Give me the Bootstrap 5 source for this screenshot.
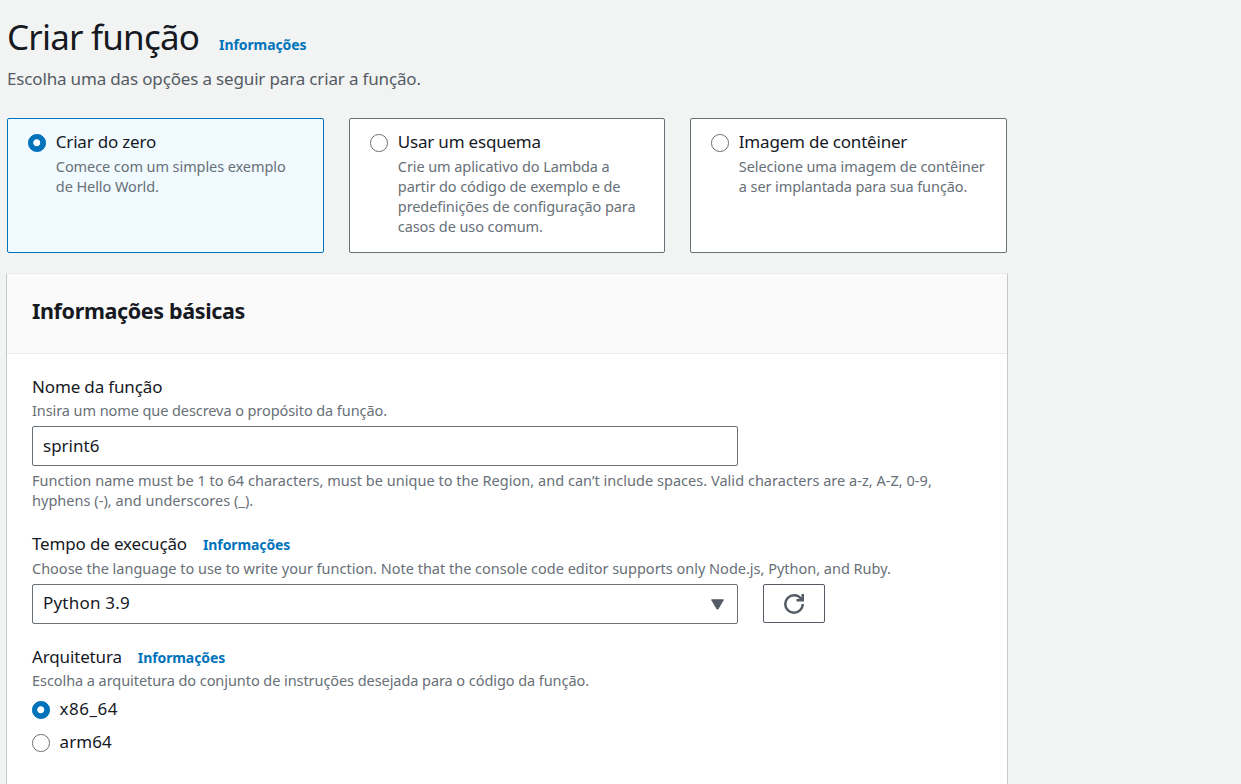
<!DOCTYPE html>
<html lang="pt-BR">
<head>
<meta charset="utf-8">
<meta name="viewport" content="width=device-width, initial-scale=1">
<title>Criar função</title>
<link href="https://cdn.jsdelivr.net/npm/bootstrap@5.3.0/dist/css/bootstrap.min.css" rel="stylesheet">
<style>
  body { background: #f2f3f3; color: #16191f; font-family: "Noto Sans", sans-serif; font-size: 17px; letter-spacing: -.15px; line-height: 27px; height: 784px; overflow: hidden; }
  .page-col { width: 1000px; margin-left: 7px; padding-top: 14px; }
  .page-title { font-size: 35px; line-height: 46px; font-weight: 400; letter-spacing: -.8px; }
  .intro { color: #545b64; line-height: 28px; padding-top: 5px; margin-bottom: 25px; letter-spacing: -.16px; }
  .info-link { font-size: 14px; line-height: 20px; font-weight: 700; letter-spacing: -.1px; color: #0073bb; text-decoration: none; margin-left: 16px; }
  .page-title + .info-link { margin-left: 20px; }
  .options { display: grid; grid-template-columns: 317px 316px 317px; gap: 25px; height: 135px; }
  .tile { border: 1px solid #687078; border-radius: 2px; background: #fff; padding: 9px 15px 0 20px; cursor: pointer; }
  .tile.selected { border-color: #0073bb; background: #f1faff; }
  .tile-text { margin-left: 10.3px; white-space: nowrap; }
  .tile-name { display: block; margin-bottom: 1px; letter-spacing: -.2px; }
  .hint { font-size: 14.5px; line-height: 20px; letter-spacing: -.08px; color: #687078; }
  .hint-en { letter-spacing: .03px; }
  .hint-runtime { letter-spacing: -.01px; margin: 1px 0 6px; }
  .form-check-input.dot { width: 17.5px; height: 17.5px; margin: 6px 0 0; border: 1px solid #687078; float: none; flex: none; background-image: none; }
  .form-check-input.dot:checked { border-color: #0073bb; background: #0073bb radial-gradient(circle, #fff 3.1px, #0073bb 3.9px) center / 100% 100% no-repeat; }
  .panel { width: 1002px; margin: 20px 0 0 -1px; height: 520px; background: #fff; border: 1px solid #c5caca; border-top-color: #eaeded; }
  .panel-head { height: 80px; background: #fafafa; border-bottom: 1px solid #eaeded; padding: 23px 25px 0; }
  .panel-head h2 { font-size: 21.5px; line-height: 28px; font-weight: 700; letter-spacing: -.36px; margin: 0; }
  .panel-body { padding: 19px 25px 0; }
  .field { width: 706px; height: 40px; border: 1px solid #687078; border-radius: 2px; padding: 0 10px 2px; color: #16191f; background: #fff; letter-spacing: 0; }
  .picker { padding: 0 13px 4px 10px; letter-spacing: .2px; }
  .picker svg { margin-top: 4px; }
  .refresh { width: 62px; height: 39px; border: 1px solid #545b64; border-radius: 2px; background: #fff; margin-left: 25px; padding: 0; }
  .group { margin-top: 20px; }
  .group-arch { margin-top: 19px; }
  .hint-name { margin-bottom: 6px; }
  .hint-arch { margin-bottom: 5px; letter-spacing: -.065px; }
  .hint-rules { margin-top: 4px; }
  .arch { gap: 10px; margin-bottom: 6px; letter-spacing: .1px; }
  .arch-wide { letter-spacing: .5px; }
</style>
</head>
<body>
<main class="page-col">
  <header>
    <div class="d-flex align-items-baseline">
      <h1 class="page-title mb-0">Criar função</h1>
      <a href="#" class="info-link">Informações</a>
    </div>
    <p class="intro">Escolha uma das opções a seguir para criar a função.</p>
  </header>
  <section class="options">
    <label class="tile selected d-flex align-items-start">
      <input class="form-check-input dot" type="radio" name="origem" checked>
      <span class="tile-text"><span class="tile-name">Criar do zero</span><span class="hint d-block">Comece com um simples exemplo<br>de Hello World.</span></span>
    </label>
    <label class="tile d-flex align-items-start">
      <input class="form-check-input dot" type="radio" name="origem">
      <span class="tile-text"><span class="tile-name">Usar um esquema</span><span class="hint d-block">Crie um aplicativo do Lambda a<br>partir do código de exemplo e de<br>predefinições de configuração para<br>casos de uso comum.</span></span>
    </label>
    <label class="tile d-flex align-items-start">
      <input class="form-check-input dot" type="radio" name="origem">
      <span class="tile-text"><span class="tile-name">Imagem de contêiner</span><span class="hint d-block">Selecione uma imagem de contêiner<br>a ser implantada para sua função.</span></span>
    </label>
  </section>
  <section class="panel">
    <div class="panel-head"><h2>Informações básicas</h2></div>
    <div class="panel-body">
      <div>
        <label for="nome" class="d-block">Nome da função</label>
        <div class="hint hint-name">Insira um nome que descreva o propósito da função.</div>
        <input id="nome" class="field d-block" type="text" value="sprint6">
        <div class="hint hint-en hint-rules">Function name must be 1 to 64 characters, must be unique to the Region, and can’t include spaces. Valid characters are a-z, A-Z, 0-9,<br>hyphens (-), and underscores (_).</div>
      </div>
      <div class="group">
        <div class="d-flex align-items-baseline">Tempo de execução <a href="#" class="info-link">Informações</a></div>
        <div class="hint hint-runtime">Choose the language to use to write your function. Note that the console code editor supports only Node.js, Python, and Ruby.</div>
        <div class="d-flex">
          <div class="field picker d-flex justify-content-between align-items-center" role="button">Python 3.9
            <svg width="13" height="11" viewBox="0 0 13 11" fill="#545b64" stroke="#545b64" stroke-linejoin="round"><path d="M.6.8h11.8L7 10H6z"/></svg>
          </div>
          <button class="refresh d-flex justify-content-center align-items-center" type="button" aria-label="Atualizar">
            <svg width="20" height="20" viewBox="0 0 16 16" fill="none" stroke="#545b64" stroke-width="2"><path d="M15 8c0 3.87-3.13 7-7 7s-7-3.13-7-7 3.13-7 7-7c2.79 0 5.2 1.63 6.33 4"/><path d="M10 5h5V0"/></svg>
          </button>
        </div>
      </div>
      <div class="group-arch">
        <div class="d-flex align-items-baseline">Arquitetura <a href="#" class="info-link">Informações</a></div>
        <div class="hint hint-arch">Escolha a arquitetura do conjunto de instruções desejada para o código da função.</div>
        <label class="arch arch-wide d-flex"><input class="form-check-input dot" type="radio" name="arq" checked><span>x86_64</span></label>
        <label class="arch d-flex"><input class="form-check-input dot" type="radio" name="arq"><span>arm64</span></label>
      </div>
    </div>
  </section>
</main>
<script src="https://cdn.jsdelivr.net/npm/bootstrap@5.3.0/dist/js/bootstrap.bundle.min.js"></script>
</body>
</html>
